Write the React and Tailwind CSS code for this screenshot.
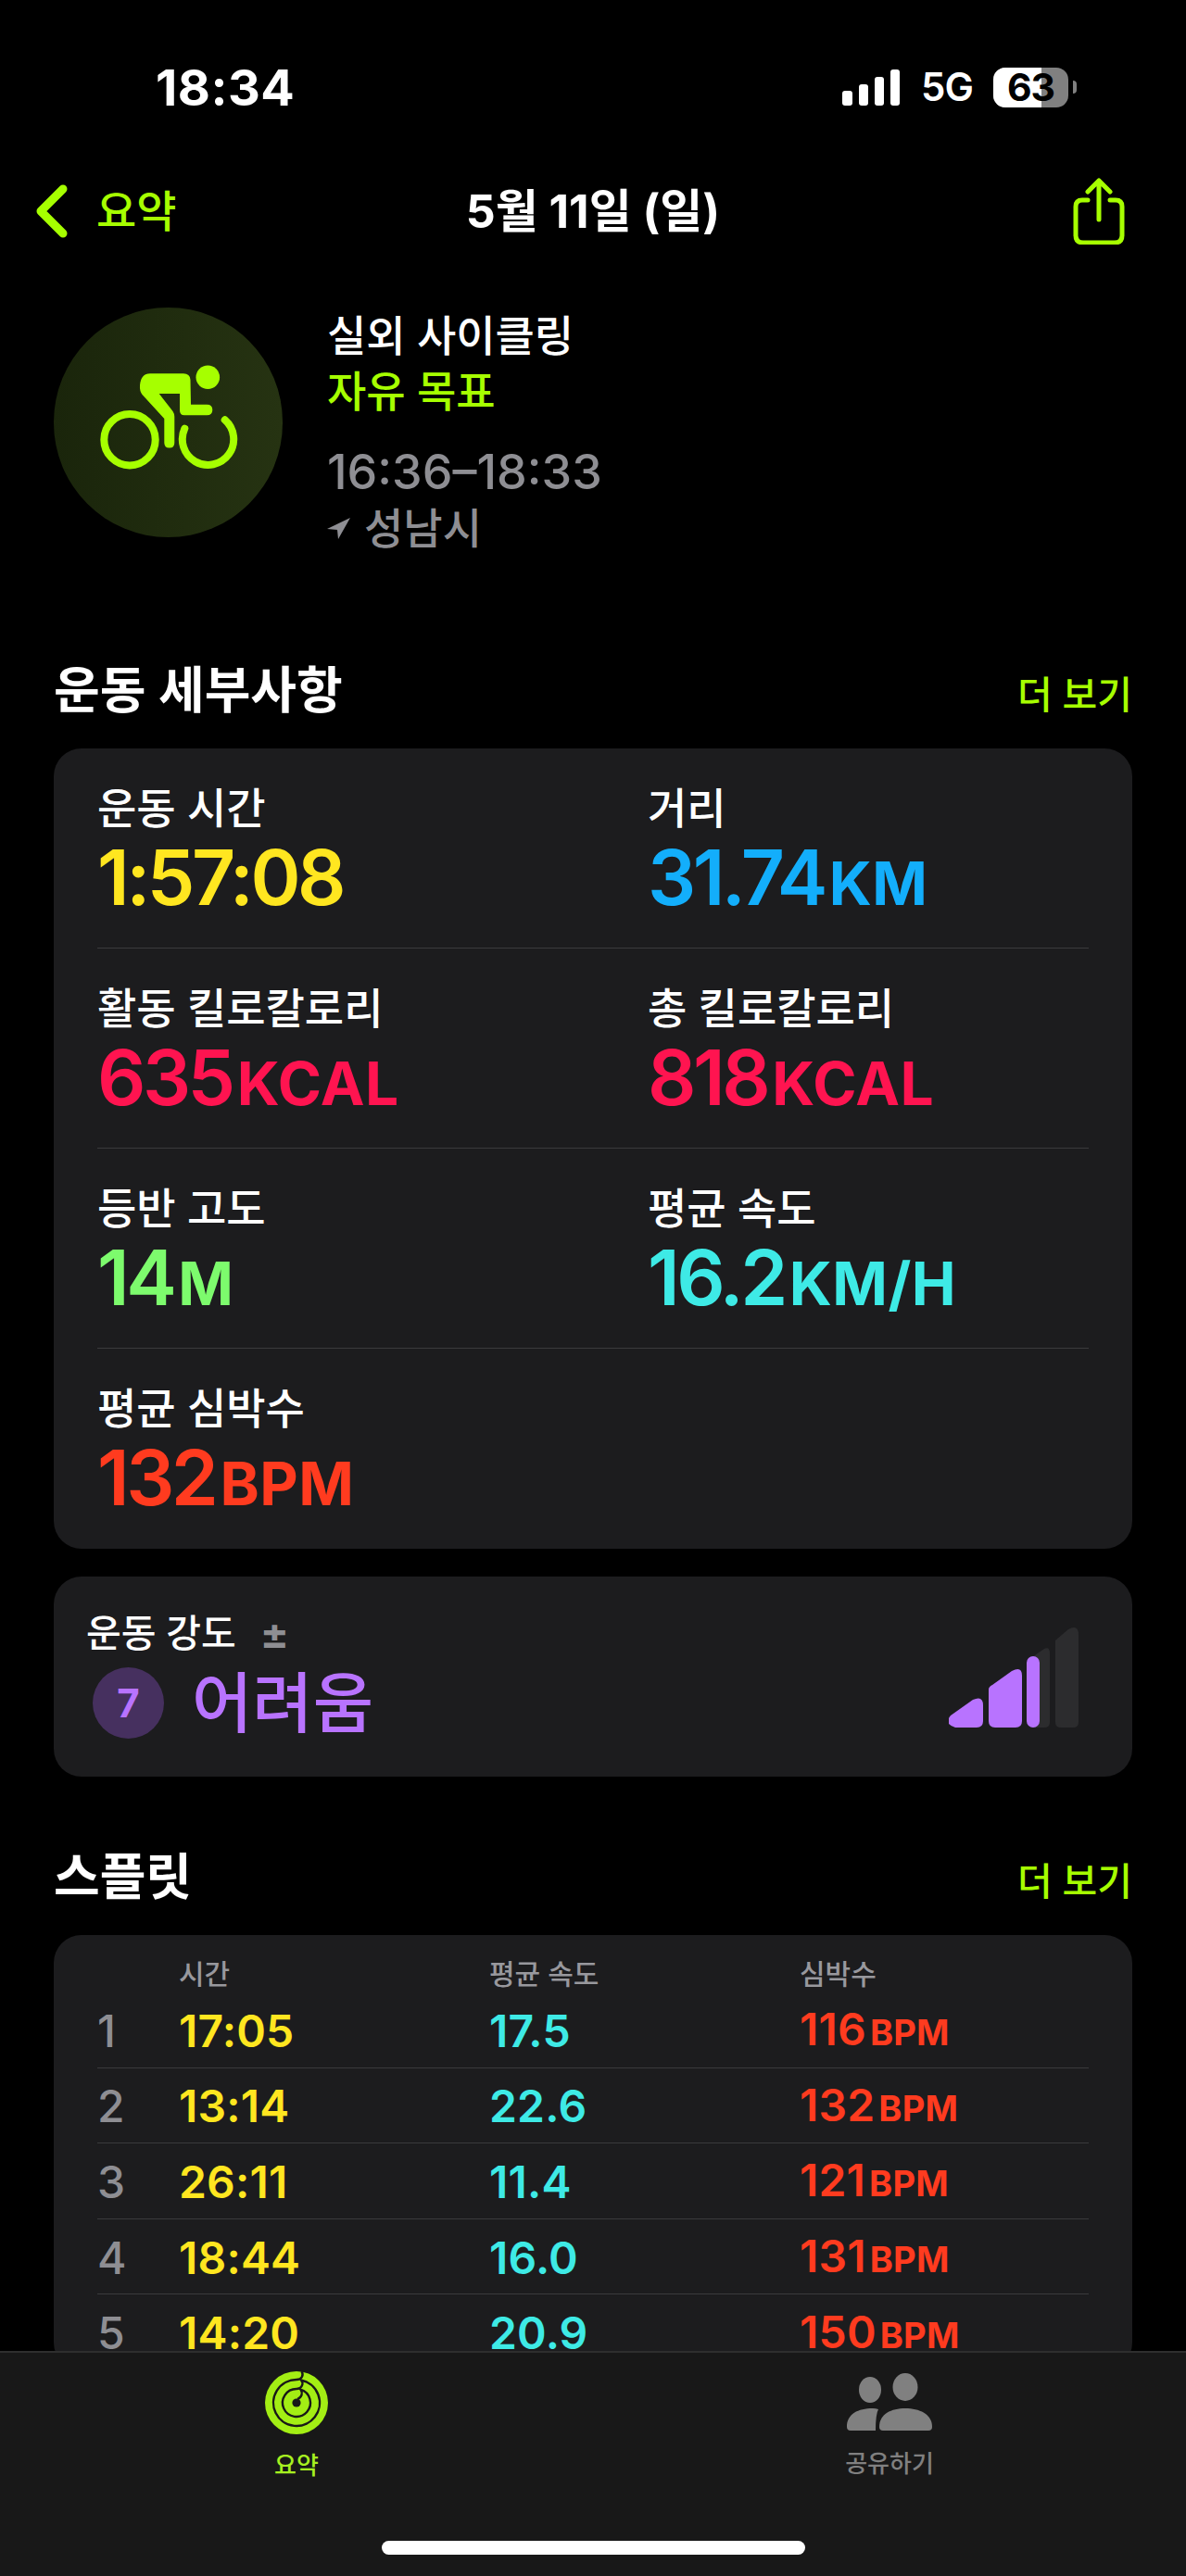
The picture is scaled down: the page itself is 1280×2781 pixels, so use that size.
import React from 'react';

const metrics = [
  [
    { label: '운동 시간', value: '1:57:08', unit: '', color: 'text-[#ffe620]' },
    { label: '거리', value: '31.74', unit: 'KM', color: 'text-[#13aefb]' },
  ],
  [
    { label: '활동 킬로칼로리', value: '635', unit: 'KCAL', color: 'text-[#ff1450]' },
    { label: '총 킬로칼로리', value: '818', unit: 'KCAL', color: 'text-[#ff1450]' },
  ],
  [
    { label: '등반 고도', value: '14', unit: 'M', color: 'text-[#7dfb6d]' },
    { label: '평균 속도', value: '16.2', unit: 'KM/H', color: 'text-[#3eeae6]' },
  ],
  [{ label: '평균 심박수', value: '132', unit: 'BPM', color: 'text-[#ff3b1f]' }],
];

const splits = [
  ['1', '17:05', '17.5', '116'],
  ['2', '13:14', '22.6', '132'],
  ['3', '26:11', '11.4', '121'],
  ['4', '18:44', '16.0', '131'],
  ['5', '14:20', '20.9', '150'],
];

function StatusBar() {
  return (
    <div className="flex h-[118px] items-start pt-[72px] pl-[168px] pr-[118px]">
      <div className="text-[54px] leading-[46px] font-bold tracking-[0.5px]">18:34</div>
      <div className="ml-auto flex items-center">
        <svg width="62" height="40" viewBox="0 0 62 40" fill="#fff">
          <rect x="0" y="24" width="11" height="16" rx="3" />
          <rect x="18" y="17" width="10" height="23" rx="3" />
          <rect x="35" y="9" width="10" height="31" rx="3" />
          <rect x="52" y="1" width="10" height="39" rx="3" />
        </svg>
        <div className="ml-[23px] w-[78px] text-[42px] leading-[44px] font-semibold tracking-[-1px]">5G</div>
        <div className="relative h-[43px] w-[81px] rounded-[13px] bg-[#808080]">
          <div className="h-full w-[52px] rounded-l-[13px] bg-white" />
          <div className="absolute inset-0 text-center text-[41px] leading-[43px] font-bold tracking-[-1px] text-black">63</div>
        </div>
        <div className="ml-[5px] h-[14px] w-[4px] rounded-r-full bg-[#808080]" />
      </div>
    </div>
  );
}

function NavBar() {
  return (
    <div className="mt-[74px] grid h-[72px] grid-cols-[1fr_auto_1fr] items-center">
      <div className="flex items-center pl-[39px] text-[#a6ff00]">
        <svg width="34" height="58" viewBox="0 0 34 58" fill="none" stroke="#a6ff00" strokeWidth="9" strokeLinecap="round" strokeLinejoin="round">
          <path d="M29 5 L5 29 L29 53" />
        </svg>
        <span className="ml-[31px] text-[47px] leading-[50px] font-medium">요약</span>
      </div>
      <div className="text-[50px] leading-[50px] font-bold">5월 11일 (일)</div>
      <div className="flex justify-end pr-[66px]">
        <svg width="56" height="72" viewBox="0 0 56 72" fill="none" stroke="#a6ff00" strokeWidth="5" strokeLinecap="round" strokeLinejoin="round">
          <path d="M16 24 H10 Q3 24 3 31 V62 Q3 70 11 70 H45 Q53 70 53 62 V31 Q53 24 46 24 H40" />
          <path d="M28 45 V3 M16 15 L28 3 L40 15" />
        </svg>
      </div>
    </div>
  );
}

function BikeIcon() {
  return (
    <svg width="247" height="248" viewBox="58 332 247 248" fill="none">
      <circle cx="224.3" cy="407.3" r="12.8" fill="#a6ff00" />
      <circle cx="140" cy="474.7" r="27.7" stroke="#a6ff00" strokeWidth="8" />
      <path d="M199.3 462.7 A27.7 27.7 0 1 0 242.7 453.3" stroke="#a6ff00" strokeWidth="8" strokeLinecap="round" />
      <path
        d="M162 403.3 H198 Q205 403.3 205.5 410 L206 436.7 H223.3 Q229.3 436.7 229.3 442.5 Q229.3 448.3 223.3 448.3 H199 Q194 448.3 194 443 V425 H171.7 L186.5 444 Q188.3 446.5 188.3 450 V478 Q188.3 483.5 182.8 483.5 Q177.3 483.5 177.3 478 V452 L153.5 426 Q150.5 422 151 416 Q152 403.3 162 403.3 Z"
        fill="#a6ff00"
      />
    </svg>
  );
}

function Hero() {
  return (
    <div className="mt-[68px] flex pl-[58px]">
      <div className="h-[248px] w-[247px] rounded-full bg-gradient-to-r from-[#1a250b] to-[#263312]">
        <BikeIcon />
      </div>
      <div className="ml-[48px] font-medium">
        <div className="text-[46px] leading-[60px]">실외 사이클링</div>
        <div className="text-[46px] leading-[60px] text-[#a6ff00]">자유 목표</div>
        <div className="mt-[28px] text-[52px] leading-[60px] font-medium text-[#8e8e93]">16:36–18:33</div>
        <div className="flex items-center text-[46px] leading-[60px] text-[#8e8e93]">
          <svg width="26" height="24" viewBox="0 0 26 24" fill="#8e8e93">
            <path d="M25 1 L0 13 L11 14 L12 24 Z" />
          </svg>
          <span className="ml-[14px]">성남시</span>
        </div>
      </div>
    </div>
  );
}

function SectionHeader({ title, className }) {
  return (
    <div className={`flex items-center justify-between px-[58px] ${className}`}>
      <h2 className="pt-[4px] text-[54px] leading-[60px] font-semibold">{title}</h2>
      <span className="pt-[12px] text-[41px] leading-[48px] font-medium text-[#a6ff00]">더 보기</span>
    </div>
  );
}

function Metric({ label, value, unit, color }) {
  return (
    <div>
      <div className="text-[46px] leading-[60px] font-medium">{label}</div>
      <div className={`mt-[8px] text-[82px] leading-[76px] font-semibold tracking-[-3.5px] ${color}`}>
        {value}
        {unit && <span className="ml-[5px] text-[64px] font-bold tracking-[0.5px]">{unit}</span>}
      </div>
    </div>
  );
}

function MetricsCard() {
  return (
    <div className="mx-[58px] mt-[32px] rounded-[30px] bg-[#1c1c1e] px-[47px]">
      {metrics.map((row, i) => (
        <div
          key={i}
          className={`grid h-[216px] grid-cols-[594px_1fr] pt-[34px] ${i < metrics.length - 1 ? 'border-b border-[#3a3a3c]' : ''}`}
        >
          {row.map((m) => (
            <Metric key={m.label} {...m} />
          ))}
        </div>
      ))}
    </div>
  );
}

function EffortCard() {
  return (
    <div className="mx-[58px] mt-[30px] flex h-[216px] justify-between rounded-[30px] bg-[#1c1c1e] pt-[36px] pl-[35px] pr-[58px]">
      <div>
        <div className="flex items-center text-[41px] leading-[50px] font-medium">
          운동 강도
          <span className="ml-[26px] text-[46px] font-bold text-[#8e8e93]">±</span>
        </div>
        <div className="mt-[12px] flex items-center pl-[7px]">
          <div className="flex h-[77px] w-[77px] items-center justify-center rounded-full bg-[#46305f] text-[42px] font-bold text-[#b873ff]">
            7
          </div>
          <span className="ml-[30px] text-[71px] leading-[77px] font-medium text-[#b873ff]">어려움</span>
        </div>
      </div>
      <svg className="mt-[19px]" width="140" height="108" viewBox="1024 1758 140 108">
        <path d="M1114 1790 L1127 1781 Q1133 1778 1133 1786 V1860 Q1133 1866 1127 1866 H1116 Z" fill="#2c2c2e" />
        <path d="M1139 1772 L1153 1760 Q1164 1754 1164 1766 V1860 Q1164 1866 1158 1866 H1145 Q1139 1866 1139 1860 Z" fill="#2c2c2e" />
        <path d="M1026 1853 L1050 1836 Q1061 1831 1061 1842 V1859 Q1061 1866 1054 1866 H1031 Q1018 1862 1026 1853 Z" fill="#b873ff" />
        <path d="M1067 1825 Q1067 1822 1071 1820 L1092 1805 Q1103 1799 1103 1810 V1859 Q1103 1866 1096 1866 H1074 Q1067 1866 1067 1859 Z" fill="#b873ff" />
        <rect x="1108" y="1789" width="14" height="77" rx="7" fill="#b873ff" />
      </svg>
    </div>
  );
}

function SplitsCard() {
  return (
    <div className="mx-[58px] mt-[32px] rounded-[30px] bg-[#1c1c1e] px-[47px] pt-[22px]">
      <div className="grid grid-cols-[88px_335px_335px_1fr] text-[30px] leading-[40px] font-medium text-[#98989d]">
        <span />
        <span>시간</span>
        <span>평균 속도</span>
        <span>심박수</span>
      </div>
      {splits.map(([n, time, speed, bpm]) => (
        <div
          key={n}
          className="grid h-[81.6px] grid-cols-[88px_335px_335px_1fr] items-center border-b border-[#3a3a3c] pt-[3px] text-[48px] leading-[60px] font-semibold tracking-[0.2px]"
        >
          <span className="font-medium text-[#8e8e93]">{n}</span>
          <span className="text-[#ffe620]">{time}</span>
          <span className="text-[#3eeae6]">{speed}</span>
          <span className="text-[#ff3b1f]">
            {bpm}
            <span className="ml-[4px] text-[38px] font-bold">BPM</span>
          </span>
        </div>
      ))}
    </div>
  );
}

function TabBar() {
  return (
    <div className="absolute inset-x-0 bottom-0 h-[243px] border-t-2 border-[#2e2e2e] bg-[#181818]">
      <div className="grid grid-cols-2">
        <div className="flex flex-col items-center pt-[19px]">
          <svg width="70" height="70" viewBox="0 0 70 70">
            <circle cx="35" cy="35" r="34" fill="#a3ee14" />
            <path
              d="M40.5 1 C43 5 41 10 35 10 A25 25 0 1 0 40 10.5 C43 14 41 20 35 20 A15 15 0 1 0 39.5 20.7 C42 24 41 29 36 31"
              fill="none"
              stroke="#181818"
              strokeWidth="2.4"
            />
            <circle cx="35" cy="35" r="4.6" fill="#181818" />
          </svg>
          <span className="mt-[16px] text-[26px] leading-[34px] font-medium text-[#a6f020]">요약</span>
        </div>
        <div className="flex flex-col items-center pt-[22px]">
          <svg width="92" height="64" viewBox="0 0 92 64" fill="#808080">
            <ellipse cx="25" cy="18" rx="12" ry="14" />
            <ellipse cx="63" cy="15" rx="13.5" ry="15" />
            <path d="M0 58 C0 44 12 38 28 38 Q31 38 34 39 Q31 44 31 62 H4 Q0 62 0 58 Z" />
            <path d="M35 58 C35 44 48 38 63 38 C78 38 92 44 92 58 Q92 62 88 62 H39 Q35 62 35 58 Z" />
          </svg>
          <span className="mt-[17px] text-[26px] leading-[34px] font-medium text-[#808080]">공유하기</span>
        </div>
      </div>
      <div className="absolute bottom-[23px] left-[412px] h-[15px] w-[457px] rounded-full bg-white" />
    </div>
  );
}

export default function App() {
  return (
    <div className="relative h-[2781px] w-[1280px] overflow-hidden bg-black font-['Inter','Noto_Sans_CJK_KR',sans-serif] text-white">
      <StatusBar />
      <NavBar />
      <Hero />
      <SectionHeader title="운동 세부사항" className="mt-[112px]" />
      <MetricsCard />
      <EffortCard />
      <SectionHeader title="스플릿" className="mt-[75px]" />
      <SplitsCard />
      <TabBar />
    </div>
  );
}
